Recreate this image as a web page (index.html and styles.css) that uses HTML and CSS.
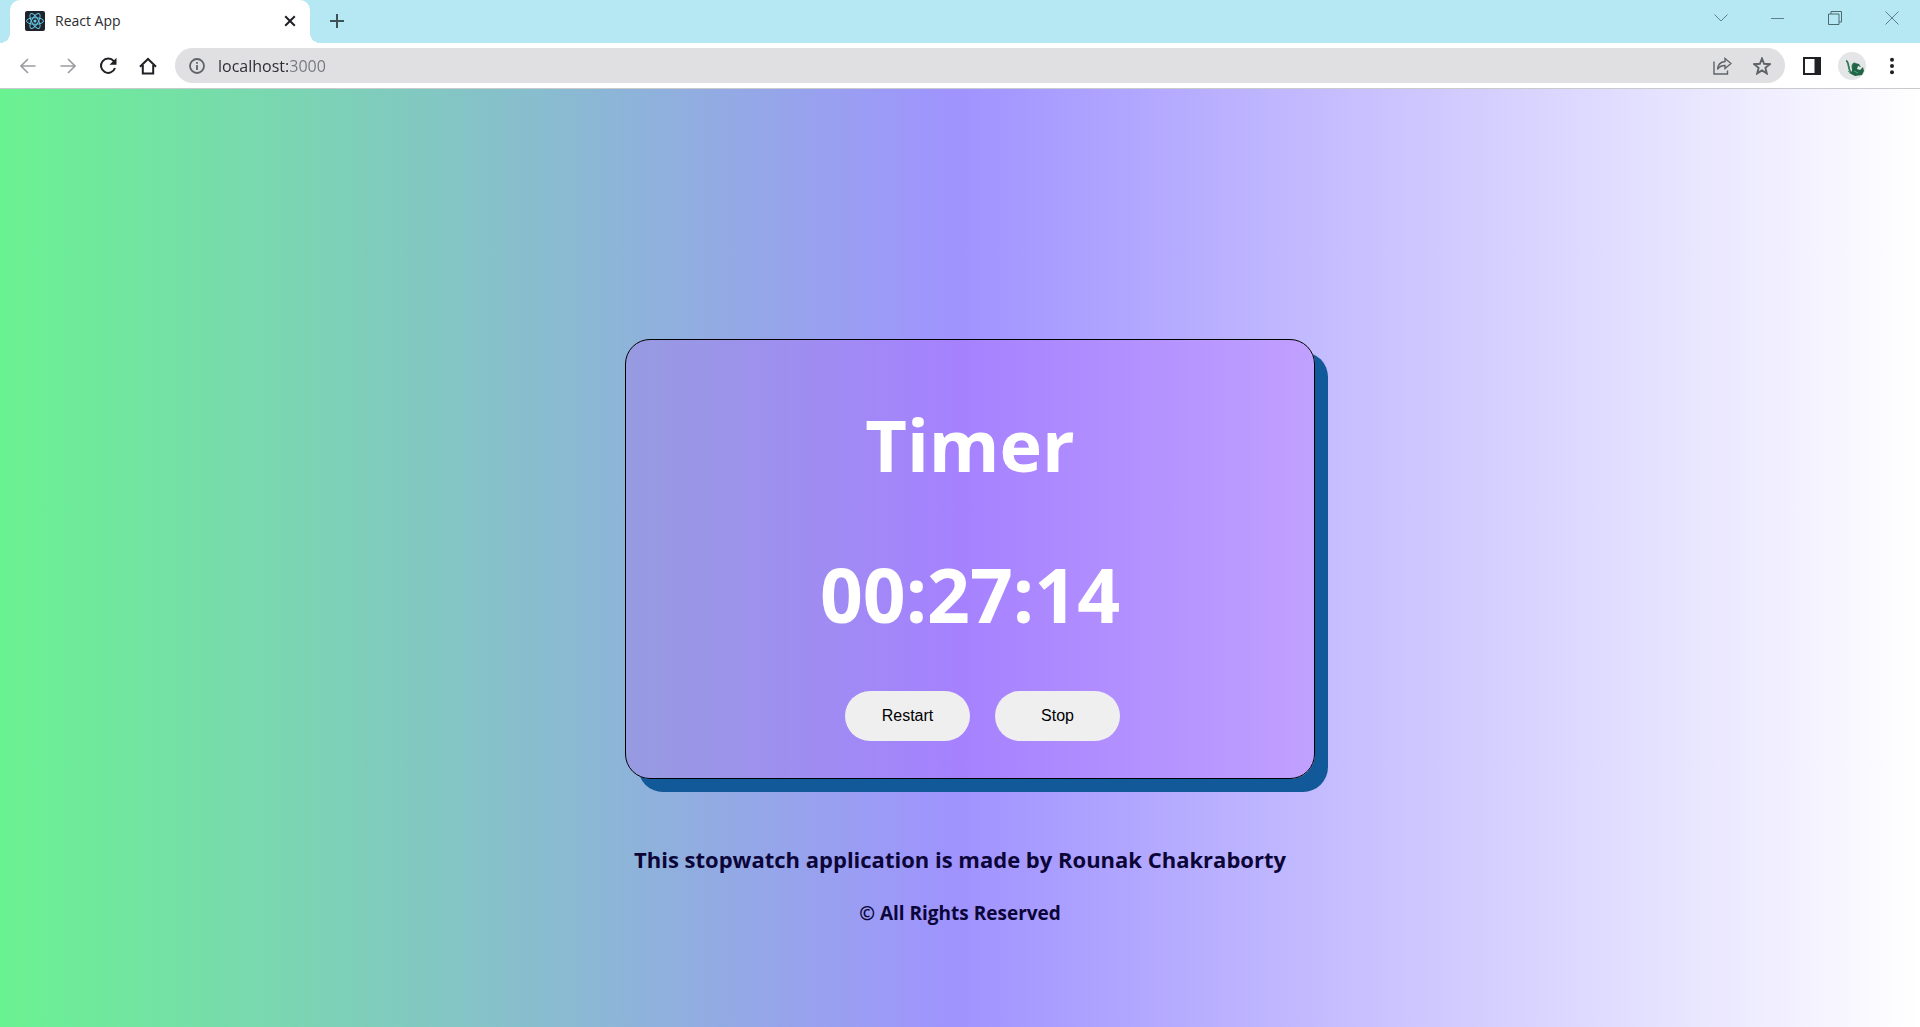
FILE: index.html
```html
<!DOCTYPE html>
<html lang="en">
<head>
<meta charset="utf-8">
<title>React App</title>
<link rel="stylesheet" href="styles.css">
</head>
<body>
<header class="browser">
  <div class="tab-strip">
    <div class="tab">
      <svg class="favicon" width="20" height="20" viewBox="0 0 20 20" fill="none" stroke="#61c6e6" stroke-width="1">
        <rect width="20" height="20" rx="2" fill="#20232a" stroke="none"/>
        <ellipse cx="10" cy="10" rx="8.5" ry="3.3"/>
        <ellipse cx="10" cy="10" rx="8.5" ry="3.3" transform="rotate(60 10 10)"/>
        <ellipse cx="10" cy="10" rx="8.5" ry="3.3" transform="rotate(120 10 10)"/>
        <circle cx="10" cy="10" r="1.6" fill="#61c6e6" stroke="none"/>
      </svg>
      <span class="tab-title">React App</span>
      <button class="icon-button tab-close" aria-label="Close tab">
        <svg width="12" height="12" viewBox="0 0 12 12" stroke="#202124" stroke-width="2"><path d="M1.2 1.2l9.6 9.6M10.8 1.2l-9.6 9.6"/></svg>
      </button>
    </div>
    <button class="icon-button new-tab" aria-label="New tab">
      <svg width="16" height="16" viewBox="0 0 16 16" stroke="#3f5257" stroke-width="2"><path d="M8 1v14M1 8h14"/></svg>
    </button>
    <div class="window-controls">
      <button class="icon-button" aria-label="Search tabs">
        <svg width="14" height="14" viewBox="0 0 14 14" fill="none" stroke="#5f8088"><path d="M.5 3.5L7 10l6.5-6.5"/></svg>
      </button>
      <button class="icon-button" aria-label="Minimize">
        <svg width="13" height="14" viewBox="0 0 13 14" fill="none" stroke="#5f8088"><path d="M0 7.5h13"/></svg>
      </button>
      <button class="icon-button" aria-label="Restore window">
        <svg width="14" height="14" viewBox="0 0 14 14" fill="none" stroke="#4c6a72"><path d="M.5 3h10.500v10.500H.5zM3 3V.5h10.500V11H11"/></svg>
      </button>
      <button class="icon-button" aria-label="Close window">
        <svg width="14" height="14" viewBox="0 0 14 14" fill="none" stroke="#5f8088"><path d="M.5.5l13 13M13.500.5l-13 13"/></svg>
      </button>
    </div>
  </div>
  <div class="toolbar">
    <nav class="tools" aria-label="Navigation">
      <button class="icon-button" aria-label="Back">
        <svg width="16" height="16" viewBox="0 0 16 16" fill="none" stroke="#9b9da0" stroke-width="1.700"><path d="M15.500 8H1.500M8 1L1 8l7 7"/></svg>
      </button>
      <button class="icon-button" aria-label="Forward">
        <svg width="16" height="16" viewBox="0 0 16 16" fill="none" stroke="#9b9da0" stroke-width="1.700"><path d="M.5 8h14M8 1l7 7-7 7"/></svg>
      </button>
      <button class="icon-button" aria-label="Reload">
        <svg width="18" height="18" viewBox="0 0 18 18" fill="none" stroke="#202124" stroke-width="2"><path d="M14.800 4.200A7.200 7.200 0 1 0 16 11"/><path d="M17.500.8v7h-7z" fill="#202124" stroke="none"/></svg>
      </button>
      <button class="icon-button" aria-label="Home">
        <svg width="18" height="18" viewBox="0 0 18 18" fill="none" stroke="#202124" stroke-width="2"><path d="M1 9.800L9 2l8 7.800M3.800 8v8.500h10.400V8"/></svg>
      </button>
    </nav>
    <div class="omnibox">
      <button class="icon-button site-info" aria-label="Site information">
        <svg width="16" height="16" viewBox="0 0 16 16" fill="none" stroke="#5f6368" stroke-width="1.800"><circle cx="8" cy="8" r="7"/><path d="M8 7v5M8 4v1.800"/></svg>
      </button>
      <input class="address" type="text" value="localhost:3000" aria-label="Address">
      <button class="icon-button" aria-label="Share">
        <svg width="19" height="18" viewBox="0 0 19 18" fill="none" stroke="#5f6368" stroke-width="1.400"><path d="M1 4.500V17h13.500v-3.500"/><path d="M12 1.500l6 5-6 5V8.500C8.500 8.500 6 9.800 4.500 12.500 4.800 8 7.800 4.900 12 4.500z"/></svg>
      </button>
      <button class="icon-button" aria-label="Bookmark this tab">
        <svg width="18" height="18" viewBox="0 0 18 18" fill="none" stroke="#5f6368" stroke-width="1.900"><path d="M9 1.500l2.100 5.300 5.700.400-4.400 3.600 1.400 5.600L9 13.400 4.200 16.400l1.400-5.600L1.200 7.200l5.700-.400z"/></svg>
      </button>
    </div>
    <div class="tools">
      <button class="icon-button" aria-label="Side panel">
        <svg width="18" height="18" viewBox="0 0 18 18" fill="none"><rect x="1" y="1" width="16" height="16" stroke="#202124" stroke-width="2"/><path d="M11.500 1H17v16h-5.500z" fill="#202124"/></svg>
      </button>
      <button class="icon-button" aria-label="Profile">
        <svg width="28" height="28" viewBox="0 0 28 28" fill="none"><circle cx="14" cy="14" r="14" fill="#e4e5e6"/><path d="M8 9c3 0 2 7 4 10 2 3 3 1 3-1-1-3-1-6 2-7" stroke="#2f7a58" stroke-width="1.800"/><path d="M15 13l2-2 4 1 2 3-3-1-1 3 3 1 3-3 1 4-2 4-7 1-6-3 3-1z" fill="#1f6647"/><path d="M10 19l3 3M16 19l4 2M21 13l1 2" stroke="#54a482"/></svg>
      </button>
      <button class="icon-button" aria-label="Menu">
        <svg width="4" height="18" viewBox="0 0 4 18" fill="#202124"><circle cx="2" cy="2.800" r="2"/><circle cx="2" cy="9" r="2"/><circle cx="2" cy="15.200" r="2"/></svg>
      </button>
    </div>
  </div>
</header>
<main class="page">
  <section class="card">
    <h1 class="heading">Timer</h1>
    <p class="heading clock" role="timer">00:27:14</p>
    <div class="actions">
      <button class="action">Restart</button>
      <button class="action">Stop</button>
    </div>
  </section>
  <footer class="footer">
    <p class="credit">This stopwatch application is made by Rounak Chakraborty</p>
    <p class="rights">© All Rights Reserved</p>
  </footer>
</main>
</body>
</html>
```
FILE: styles.css
```css
* {
  box-sizing: border-box;
}

body {
  margin: 0;
  min-height: 100vh;
  display: flex;
  flex-direction: column;
  font-family: "Open Sans", "Noto Sans", sans-serif;
}

h1,
p {
  margin: 0;
}

svg {
  display: block;
}

.icon-button {
  display: flex;
  align-items: center;
  justify-content: center;
  width: 40px;
  height: 35px;
  padding: 0;
  border: 0;
  background: none;
}

/* Browser frame */
.browser {
  background: #fff;
  border-bottom: 1px solid #c9cacc;
}

.tab-strip {
  display: flex;
  height: 43px;
  padding-left: 10px;
  background: #b5e8f2;
}

.tab {
  position: relative;
  display: flex;
  align-items: center;
  gap: 10px;
  width: 300px;
  padding: 0 8px 1px 15px;
  border-radius: 10px 10px 0 0;
  background: #fff;
}

.tab::before,
.tab::after {
  content: "";
  position: absolute;
  bottom: 0;
  width: 10px;
  height: 10px;
}

.tab::before {
  right: 100%;
  background: radial-gradient(circle at 0 0, transparent 10px, #fff 10px);
}

.tab::after {
  left: 100%;
  background: radial-gradient(circle at 100% 0, transparent 10px, #fff 10px);
}

.tab-title {
  flex: 1;
  font-size: 14px;
  line-height: 20px;
  color: #2b2c2f;
}

.tab-close {
  width: 24px;
}

.new-tab {
  height: 42px;
  margin-left: 7px;
}

.window-controls {
  display: flex;
  margin-left: auto;
}

.window-controls .icon-button {
  width: 57px;
}

.toolbar {
  display: flex;
  align-items: center;
  gap: 7px;
  padding: 5px 8px;
}

.tools {
  display: flex;
}

.omnibox {
  flex: 1;
  display: flex;
  align-items: center;
  height: 35px;
  padding: 0 3px 0 8px;
  border-radius: 18px;
  background: #e0e0e2;
}

.site-info {
  width: 28px;
}

.address {
  flex: 1;
  min-width: 0;
  height: 30px;
  margin-left: 7px;
  padding: 0;
  border: 0;
  outline: 0;
  font-family: inherit;
  font-size: 16px;
  /* The host is dark, the port is grey. */
  color: transparent;
  background: linear-gradient(to right, #2b2c30 70px, #74777b 70px);
  background-clip: text;
  -webkit-background-clip: text;
}

/* Stopwatch page */
.page {
  flex: 1;
  display: flex;
  flex-direction: column;
  align-items: center;
  padding: 250px 20px 90px;
  background: linear-gradient(to right, #6af291, #a093ff 50%, #fff);
}

.card {
  display: flex;
  flex-direction: column;
  align-items: center;
  width: 100%;
  max-width: 690px;
  margin-left: 20px;
  padding: 52px 20px 37px;
  border: 1px solid #000;
  border-radius: 25px;
  background: rgba(187, 70, 253, 0.22);
  box-shadow: 13px 13px #115998;
}

.heading {
  margin-bottom: 46px;
  font-size: 72px;
  font-weight: 700;
  line-height: 104px;
  color: #fff;
}

.clock {
  margin-bottom: 45px;
  font-size: 75px;
}

.actions {
  display: flex;
  gap: 25px;
  padding-left: 25px;
}

.action {
  width: 125px;
  height: 50px;
  padding: 0;
  border: 0;
  border-radius: 25px;
  background: #efefef;
  font-family: "Liberation Sans", Arial, sans-serif;
  font-size: 16px;
  color: #000;
}

.footer {
  display: flex;
  flex-direction: column;
  gap: 24px;
  margin-top: 64px;
  text-align: center;
  font-weight: 700;
  color: #0c0538;
}

.credit {
  font-size: 22px;
  line-height: 32px;
}

.rights {
  font-size: 19px;
  line-height: 28px;
}
```
